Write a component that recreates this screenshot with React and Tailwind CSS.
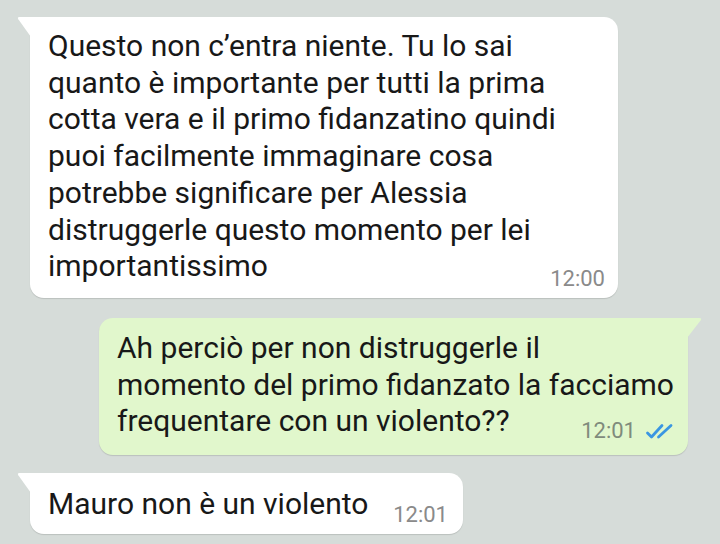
import React from 'react';

const font = { fontFamily: 'Roboto, "Noto Sans", sans-serif' };

function TailLeft() {
  return (
    <svg className="absolute left-[-13px] top-0" width="14" height="20" viewBox="0 0 14 20">
      <path d="M14 0 H2.5 Q0 0 1.3 2.2 L14 20 Z" fill="#ffffff" />
    </svg>
  );
}

function TailRight() {
  return (
    <svg className="absolute right-[-14px] top-0" width="15" height="20" viewBox="0 0 15 20">
      <path d="M0 0 H12.5 Q15 0 13.7 2.2 L0 20 Z" fill="#e1f7cc" />
    </svg>
  );
}

function Ticks() {
  return (
    <svg width="30" height="17" viewBox="0 0 30 17" className="ml-[9px] mb-[2px]">
      <path d="M2.5 10 L6.5 14 L17 2.5" fill="none" stroke="#3a96e2" strokeWidth="2.8" strokeLinecap="round" strokeLinejoin="round" />
      <path d="M13.5 14 L26 2.5" fill="none" stroke="#3a96e2" strokeWidth="2.8" strokeLinecap="round" />
    </svg>
  );
}

export default function App() {
  const line = 'leading-[36.7px] text-[30px] text-[#181818]';

  return (
    <div className="w-[720px] h-[544px] overflow-hidden bg-[#d6dcd9] flex flex-col" style={font}>
      {/* incoming */}
      <div className="relative ml-[30px] mt-[17px] w-[588px] bg-white rounded-[14px] rounded-tl-none shadow-[0_1px_1px_rgba(0,0,0,0.13)] pt-[11px] pb-[13px] pl-[18px] pr-[13px]">
        <TailLeft />
        <div className={line}>Questo non c’entra niente. Tu lo sai</div>
        <div className={line}>quanto è importante per tutti la prima</div>
        <div className={line}>cotta vera e il primo fidanzatino quindi</div>
        <div className={line}>puoi facilmente immaginare cosa</div>
        <div className={line}>potrebbe significare per Alessia</div>
        <div className={line}>distruggerle questo momento per lei</div>
        <div className="flex items-end justify-between">
          <div className={line}>importantissimo</div>
          <span className="text-[22px] leading-[22px] text-[#8a8a8a] mb-[-5px]">12:00</span>
        </div>
      </div>

      {/* outgoing */}
      <div className="relative ml-[99px] mt-[20px] w-[589px] bg-[#e1f7cc] rounded-[14px] rounded-tr-none shadow-[0_1px_1px_rgba(0,0,0,0.13)] pt-[12px] pb-[15px] pl-[18px] pr-[13px]">
        <TailRight />
        <div className={line}>Ah perciò per non distruggerle il</div>
        <div className={line}>momento del primo fidanzato la facciamo</div>
        <div className="flex items-end justify-between">
          <div className={line}>frequentare con un violento??</div>
          <div className="flex items-end mb-[-2px]">
            <span className="text-[22px] leading-[22px] text-[#7f8b7c]">12:01</span>
            <Ticks />
          </div>
        </div>
      </div>

      {/* incoming */}
      <div className="relative ml-[30px] mt-[18px] w-[433px] bg-white rounded-[14px] rounded-tl-none shadow-[0_1px_1px_rgba(0,0,0,0.13)] pt-[13px] pb-[11px] pl-[18px] pr-[15px]">
        <TailLeft />
        <div className="flex items-end justify-between">
          <div className={line}>Mauro non è un violento</div>
          <span className="text-[22px] leading-[22px] text-[#8a8a8a] mb-[-3px]">12:01</span>
        </div>
      </div>
    </div>
  );
}
